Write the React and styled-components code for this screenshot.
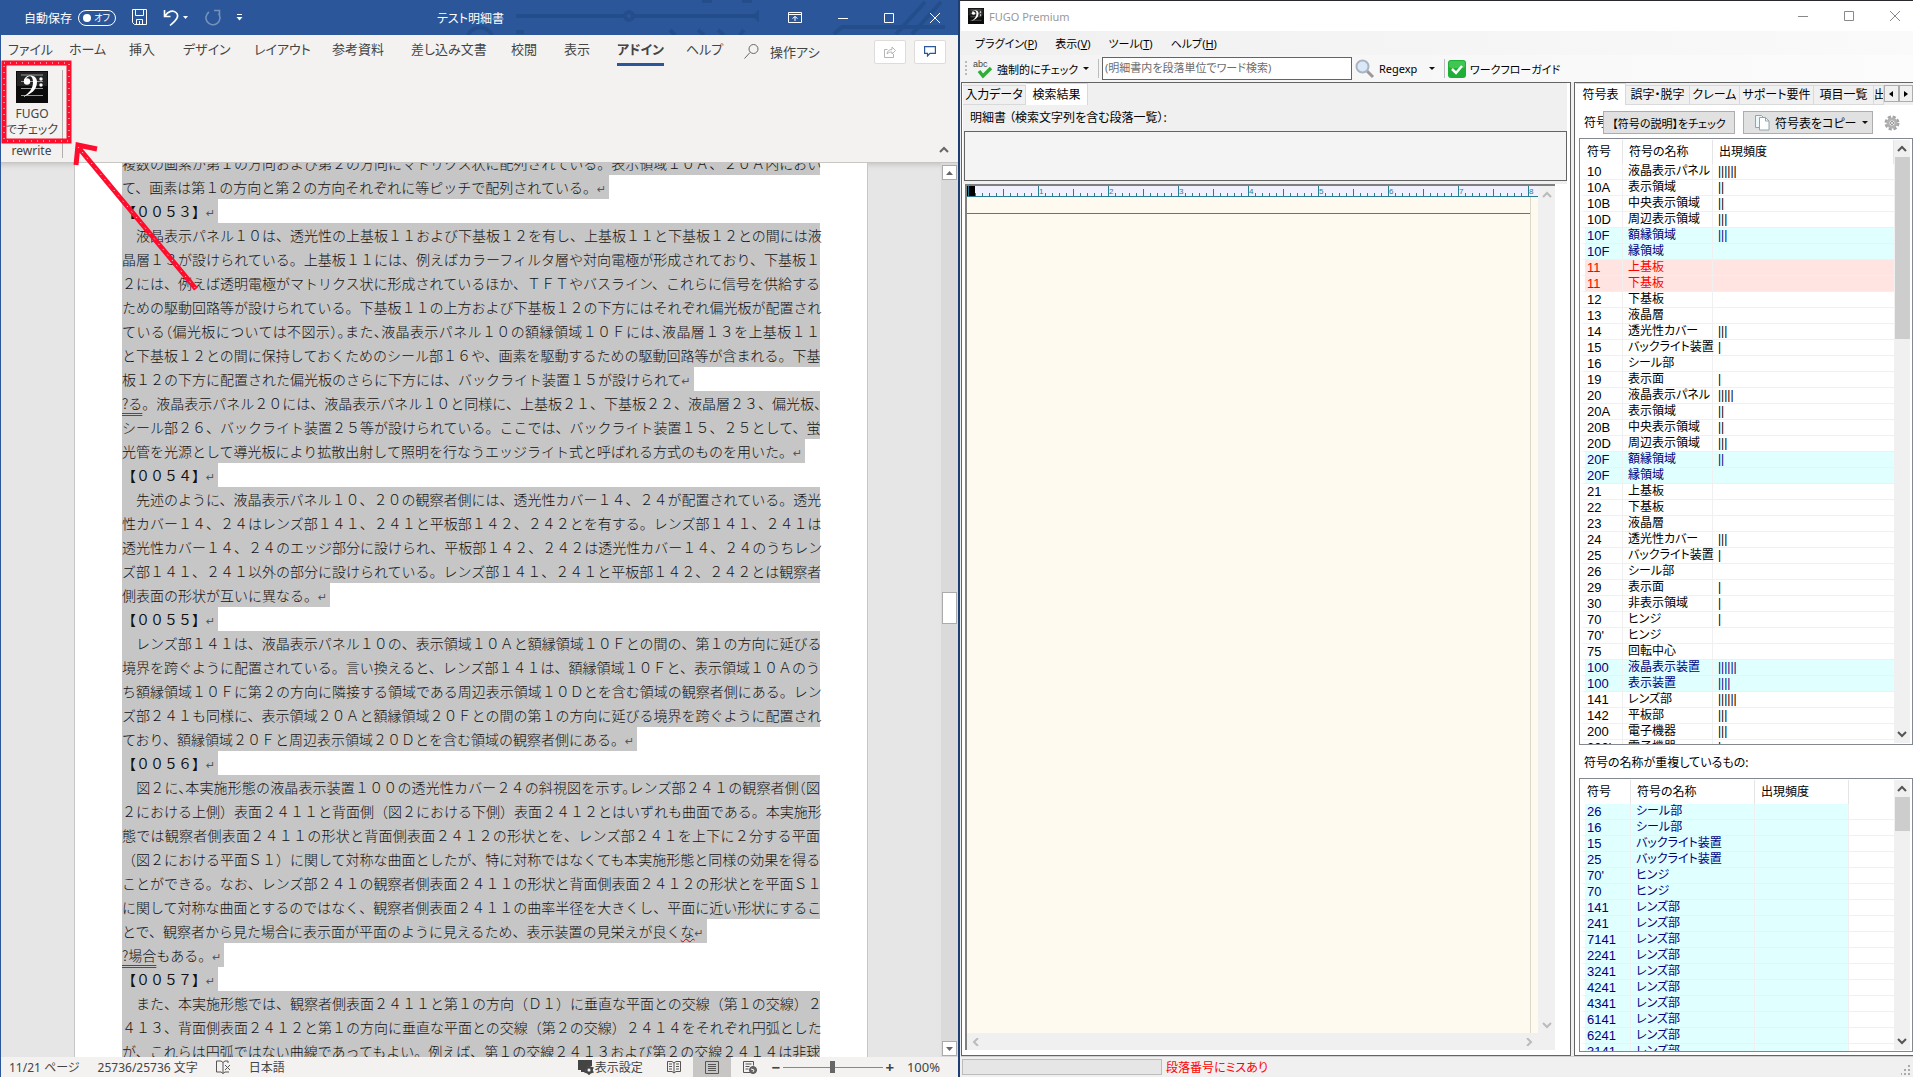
import { useState } from 'react'
import styled, { createGlobalStyle } from 'styled-components'

const TABS = ['ファイル', 'ホーム', '挿入', 'デザイン', 'レイアウト', '参考資料', '差し込み文書', '校閲', '表示', 'アドイン', 'ヘルプ']

// full: the line runs to the right margin, tight: half-width punctuation, head: paragraph number
const LINES = [
    { text: '複数の画素が第１の方向および第２の方向にマトリクス状に配列されている。表示領域１０Ａ、２０Ａ内におい', full: true },
    { text: 'て、画素は第１の方向と第２の方向それぞれに等ピッチで配列されている。' },
    { text: '【００５３】', head: true },
    { text: '　液晶表示パネル１０は、透光性の上基板１１および下基板１２を有し、上基板１１と下基板１２との間には液', full: true },
    { text: '晶層１３が設けられている。上基板１１には、例えばカラーフィルタ層や対向電極が形成されており、下基板１', full: true },
    { text: '２には、例えば透明電極がマトリクス状に形成されているほか、ＴＦＴやバスライン、これらに信号を供給する', full: true },
    { text: 'ための駆動回路等が設けられている。下基板１１の上方および下基板１２の下方にはそれぞれ偏光板が配置され', full: true },
    { text: 'ている（偏光板については不図示）。また、液晶表示パネル１０の額縁領域１０Ｆには、液晶層１３を上基板１１', full: true, tight: true },
    { text: 'と下基板１２との間に保持しておくためのシール部１６や、画素を駆動するための駆動回路等が含まれる。下基', full: true },
    { text: '板１２の下方に配置された偏光板のさらに下方には、バックライト装置１５が設けられて' },
    { mark: '?る', text: '。液晶表示パネル２０には、液晶表示パネル１０と同様に、上基板２１、下基板２２、液晶層２３、偏光板、', full: true },
    { text: 'シール部２６、バックライト装置２５等が設けられている。ここでは、バックライト装置１５、２５として、蛍', full: true },
    { text: '光管を光源として導光板により拡散出射して照明を行なうエッジライト式と呼ばれる方式のものを用いた。' },
    { text: '【００５４】', head: true },
    { text: '　先述のように、液晶表示パネル１０、２０の観察者側には、透光性カバー１４、２４が配置されている。透光', full: true },
    { text: '性カバー１４、２４はレンズ部１４１、２４１と平板部１４２、２４２とを有する。レンズ部１４１、２４１は', full: true },
    { text: '透光性カバー１４、２４のエッジ部分に設けられ、平板部１４２、２４２は透光性カバー１４、２４のうちレン', full: true },
    { text: 'ズ部１４１、２４１以外の部分に設けられている。レンズ部１４１、２４１と平板部１４２、２４２とは観察者', full: true },
    { text: '側表面の形状が互いに異なる。' },
    { text: '【００５５】', head: true },
    { text: '　レンズ部１４１は、液晶表示パネル１０の、表示領域１０Ａと額縁領域１０Ｆとの間の、第１の方向に延びる', full: true },
    { text: '境界を跨ぐように配置されている。言い換えると、レンズ部１４１は、額縁領域１０Ｆと、表示領域１０Ａのう', full: true },
    { text: 'ち額縁領域１０Ｆに第２の方向に隣接する領域である周辺表示領域１０Ｄとを含む領域の観察者側にある。レン', full: true },
    { text: 'ズ部２４１も同様に、表示領域２０Ａと額縁領域２０Ｆとの間の第１の方向に延びる境界を跨ぐように配置され', full: true },
    { text: 'ており、額縁領域２０Ｆと周辺表示領域２０Ｄとを含む領域の観察者側にある。' },
    { text: '【００５６】', head: true },
    { text: '　図２に、本実施形態の液晶表示装置１００の透光性カバー２４の斜視図を示す。レンズ部２４１の観察者側（図', full: true, tight: true },
    { text: '２における上側）表面２４１１と背面側（図２における下側）表面２４１２とはいずれも曲面である。本実施形', full: true },
    { text: '態では観察者側表面２４１１の形状と背面側表面２４１２の形状とを、レンズ部２４１を上下に２分する平面', full: true },
    { text: '（図２における平面Ｓ１）に関して対称な曲面としたが、特に対称ではなくても本実施形態と同様の効果を得る', full: true },
    { text: 'ことができる。なお、レンズ部２４１の観察者側表面２４１１の形状と背面側表面２４１２の形状とを平面Ｓ１', full: true },
    { text: 'に関して対称な曲面とするのではなく、観察者側表面２４１１の曲率半径を大きくし、平面に近い形状にするこ', full: true },
    { text: 'とで、観察者から見た場合に表示面が平面のように見えるため、表示装置の見栄えが良く', wavy: 'な' },
    { mark: '?場合', text: 'もある。' },
    { text: '【００５７】', head: true },
    { text: '　また、本実施形態では、観察者側表面２４１１と第１の方向（Ｄ１）に垂直な平面との交線（第１の交線）２', full: true },
    { text: '４１３、背面側表面２４１２と第１の方向に垂直な平面との交線（第２の交線）２４１４をそれぞれ円弧とした', full: true },
    { text: 'が、これらは円弧ではない曲線であってもよい。例えば、第１の交線２４１３および第２の交線２４１４は非球', full: true },
]

const SIGNS = [
    ['10', '液晶表示パネル', 6], ['10A', '表示領域', 2], ['10B', '中央表示領域', 2], ['10D', '周辺表示領域', 3],
    ['10F', '額縁領域', 3, 'dup'], ['10F', '縁領域', 0, 'dup'], ['11', '上基板', 0, 'error'], ['11', '下基板', 0, 'error'],
    ['12', '下基板', 0], ['13', '液晶層', 0], ['14', '透光性カバー', 3], ['15', 'バックライト装置', 1],
    ['16', 'シール部', 0], ['19', '表示面', 1], ['20', '液晶表示パネル', 5], ['20A', '表示領域', 2],
    ['20B', '中央表示領域', 2], ['20D', '周辺表示領域', 3], ['20F', '額縁領域', 2, 'dup'], ['20F', '縁領域', 0, 'dup'],
    ['21', '上基板', 0], ['22', '下基板', 0], ['23', '液晶層', 0], ['24', '透光性カバー', 3],
    ['25', 'バックライト装置', 1], ['26', 'シール部', 0], ['29', '表示面', 1], ['30', '非表示領域', 1],
    ['70', 'ヒンジ', 1], ["70'", 'ヒンジ', 0], ['75', '回転中心', 0], ['100', '液晶表示装置', 6, 'dup'],
    ['100', '表示装置', 4, 'dup'], ['141', 'レンズ部', 6], ['142', '平板部', 3], ['200', '電子機器', 3], ["200'", '電子機器', 1],
]

const NAMES = [
    ['26', 'シール部'], ['16', 'シール部'], ['15', 'バックライト装置'], ['25', 'バックライト装置'], ["70'", 'ヒンジ'], ['70', 'ヒンジ'],
    ['141', 'レンズ部'], ['241', 'レンズ部'], ['7141', 'レンズ部'], ['2241', 'レンズ部'], ['3241', 'レンズ部'], ['4241', 'レンズ部'],
    ['4341', 'レンズ部'], ['6141', 'レンズ部'], ['6241', 'レンズ部'], ['3141', 'レンズ部'],
]

export default function App() {
    return (
        <>
            <GlobalStyle />
            <Desktop>
                <Word />
                <Fugo />
            </Desktop>
        </>
    )
}

function Word() {
    const [tab, setTab] = useState('アドイン')
    const [zoom, setZoom] = useState(50)

    return (
        <WordWindow>
            <WordTitle>
                <Circuit />
                <QuickBar>
                    <AutoSave>自動保存 <Switch><input type="checkbox" /><span>オフ</span></Switch></AutoSave>
                    <TitleButton aria-label="上書き保存"><svg width="17" height="17" viewBox="0 0 17 17"><path d="M1.500.5h14v15h-12l-2-2zM4.500.5v6h8v-6M5.500 15.500v-5h6v5M8.500 12v3.500" /></svg></TitleButton>
                    <TitleButton aria-label="元に戻す"><svg width="26" height="18" viewBox="0 0 26 18"><path d="M1.500 1v6.500h6M2 7C5 2 10 .8 13 3.500s2.500 6-6 13" strokeWidth="1.600" /><path d="M20 7h5l-2.500 3z" fill="#fff" stroke="none" /></svg></TitleButton>
                    <TitleButton $dim aria-label="やり直し"><svg width="17" height="17" viewBox="0 0 17 17"><path d="M10 1.500h5.500v5M14.500 4.500A7 7 0 1 1 5 3" strokeWidth="1.600" /></svg></TitleButton>
                    <TitleButton aria-label="カスタマイズ"><svg width="7" height="9" viewBox="0 0 7 9"><path d="M1 1.500h5" /><path d="M.5 4h6l-3 3.500z" fill="#fff" stroke="none" /></svg></TitleButton>
                </QuickBar>
                <DocName>テスト明細書</DocName>
                <WordControls>
                    <TitleButton aria-label="リボンの表示"><svg width="14" height="12" viewBox="0 0 14 12"><path d="M.5.5h13v10H.5zM.5 2.500h13M7 9V4.500M4.500 6.500L7 4.500l2.500 2" /></svg></TitleButton>
                    <TitleButton aria-label="最小化"><svg width="10" height="10" viewBox="0 0 10 10"><path d="M0 5.500h10" /></svg></TitleButton>
                    <TitleButton aria-label="最大化"><svg width="10" height="10" viewBox="0 0 10 10"><path d="M.5.5h9v9h-9z" /></svg></TitleButton>
                    <TitleButton aria-label="閉じる"><svg width="10" height="10" viewBox="0 0 10 10"><path d="M0 0l10 10M10 0L0 10" /></svg></TitleButton>
                </WordControls>
            </WordTitle>

            <RibbonTabs>
                {TABS.map(name => (
                    <RibbonTab key={name} $active={tab === name} onClick={() => setTab(name)}><span>{name}</span></RibbonTab>
                ))}
                <Assist>
                    <svg width="15" height="15" viewBox="0 0 15 15" fill="none" stroke="#666"><circle cx="9.500" cy="5" r="4.500" /><path d="M6 8.500L.5 14.500" /></svg>
                    <span>操作アシスト</span>
                </Assist>
                <RibbonBox disabled aria-label="共有"><svg width="12" height="12" viewBox="0 0 12 12" fill="none" stroke="#b5b5b5"><path d="M3.500 3.500H.5v8h9V8M3 8c.5-3 2-4.500 5-4.500V1l3.500 3.500L8 8V6C6 6 4.500 6.500 3 8z" /></svg></RibbonBox>
                <RibbonBox aria-label="コメント"><svg width="12" height="11" viewBox="0 0 12 11" fill="none" stroke="#2b579a" strokeWidth="1.200"><path d="M.6.6h10.800v6.800H6L3.500 10V7.400H.6z" /></svg></RibbonBox>
            </RibbonTabs>

            <Ribbon>
                <Group>
                    <FugoButton>
                        <Clef size={32} />
                        <span>FUGO</span>
                        <span>でチェック</span>
                    </FugoButton>
                    <GroupName>rewrite</GroupName>
                </Group>
                <Collapse aria-label="リボンを折りたたむ"><Chevron dir="up" color="#666" /></Collapse>
            </Ribbon>

            <DocArea>
                <PageArea>
                    <Page>
                        {LINES.map((line, i) => (
                            <Line key={i} $full={line.full} $tight={line.tight} $head={line.head}>
                                {line.mark && <Grammar>{line.mark}</Grammar>}
                                {line.text}
                                {line.wavy && <Spelling>{line.wavy}</Spelling>}
                                {!line.full && <Return>↵</Return>}
                            </Line>
                        ))}
                    </Page>
                </PageArea>
                <WordScroll>
                    <ScrollBox aria-label="上へ"><svg width="7" height="4" viewBox="0 0 7 4"><path d="M0 4h7L3.500 0z" fill="#666" /></svg></ScrollBox>
                    <ScrollThumb />
                    <ScrollBox aria-label="下へ"><svg width="7" height="4" viewBox="0 0 7 4"><path d="M0 0h7L3.500 4z" fill="#666" /></svg></ScrollBox>
                </WordScroll>
            </DocArea>

            <WordStatus>
                <StatusInfo>
                    <span>11/21 ページ</span>
                    <span>25736/25736 文字</span>
                    <svg width="15" height="14" viewBox="0 0 15 14" fill="none" stroke="#555"><path d="M7 2.500L5 1H.5v11H5l2 1.500zM7 2.500L9 1h3v2M7 13.500L9 12h4M9 5l5 5M14 5l-5 5" /></svg>
                    <span>日本語</span>
                </StatusInfo>
                <DisplaySetting>
                    <svg width="16" height="16" viewBox="0 0 16 16"><path d="M0 1h14v6h-4l-3 3v3H3v-2H0z" fill="#444" /><circle cx="11" cy="11" r="3" fill="none" stroke="#444" strokeWidth="2" /><path d="M11 6v10M6.500 8.500l9 5M6.500 13.500l9-5" stroke="#444" strokeWidth="1.500" /><circle cx="11" cy="11" r="1.500" fill="#f3f2f1" /></svg>
                    表示設定
                </DisplaySetting>
                <ViewButton aria-label="閲覧モード"><svg width="14" height="13" viewBox="0 0 14 13"><path d="M7 2L5 .5H.5v10H5L7 12l2-1.500h4.500V.5H9zM7 2v10M2 3h3M2 5.500h3M2 8h3M9 3h3M9 5.500h3M9 8h3" /></svg></ViewButton>
                <ViewButton $active aria-label="印刷レイアウト"><svg width="14" height="13" viewBox="0 0 14 13"><path d="M.5.5h13v12H.5zM3 3.500h8M3 5.500h8M3 7.500h8M3 9.500h8" /></svg></ViewButton>
                <ViewButton aria-label="Web レイアウト"><svg width="14" height="13" viewBox="0 0 14 13"><path d="M7 11.500H.5V.5h10v4M2.500 3h6M2.500 5.500h4M2.500 8h3" /><circle cx="10" cy="9" r="3.500" fill="#666" /><path d="M8 8l3 1-1 2" stroke="#f3f2f1" /></svg></ViewButton>
                <ZoomStep aria-label="縮小">−</ZoomStep>
                <ZoomRange type="range" aria-label="ズーム" value={zoom} onChange={e => setZoom(e.target.value)} />
                <ZoomStep aria-label="拡大">+</ZoomStep>
                <ZoomValue>100%</ZoomValue>
            </WordStatus>

            <RedFrame>
                <rect x="3" y="3" width="65" height="78" stroke="#ff0d2d" strokeWidth="5" />
                <rect x="3" y="3" width="65" height="78" stroke="#fff" strokeDasharray="1 5" />
            </RedFrame>
            <RedArrow />
        </WordWindow>
    )
}

function Fugo() {
    return (
        <FugoWindow>
            <FugoTitle>
                <Clef size={16} />
                <span>FUGO Premium</span>
                <FugoControls>
                    <PlainButton aria-label="最小化"><svg width="10" height="10" viewBox="0 0 10 10"><path d="M0 5.500h10" /></svg></PlainButton>
                    <PlainButton aria-label="最大化"><svg width="10" height="10" viewBox="0 0 10 10"><path d="M.5.5h9v9h-9z" /></svg></PlainButton>
                    <PlainButton aria-label="閉じる"><svg width="10" height="10" viewBox="0 0 10 10"><path d="M0 0l10 10M10 0L0 10" /></svg></PlainButton>
                </FugoControls>
            </FugoTitle>
            <MenuBar>
                <button>プラグイン(<u>P</u>)</button>
                <button>表示(<u>V</u>)</button>
                <button>ツール(<u>T</u>)</button>
                <button>ヘルプ(<u>H</u>)</button>
            </MenuBar>
            <ToolBar>
                <Grip />
                <Tool $width={104}>
                    <svg width="20" height="20" viewBox="0 0 20 20"><text x="0" y="8" fontSize="9" fontFamily="Liberation Sans" fill="#444">abc</text><path d="M6 12l4 5 8-8" fill="none" stroke="#2fae35" strokeWidth="3.500" /></svg>
                    強制的にチェック
                </Tool>
                <Caret />
                <Separator />
                <Search aria-label="ワード検索" placeholder="(明細書内を段落単位でワード検索)" />
                <Tool $width={68}>
                    <svg width="20" height="20" viewBox="0 0 20 20"><path d="M12 12l6 6" stroke="#999" strokeWidth="3" /><circle cx="7.500" cy="7.500" r="6" fill="#d9e9f8" stroke="#a9b4c0" strokeWidth="2" /></svg>
                    Regexp
                </Tool>
                <Caret />
                <Separator />
                <Tool $width={118}>
                    <svg width="18" height="18" viewBox="0 0 18 18"><rect width="18" height="18" rx="3" fill="#1fae36" /><rect x="1" y="1" width="16" height="7" rx="2" fill="#3fc653" /><path d="M4 9l4 4 6-7" fill="none" stroke="#fff" strokeWidth="2.500" /></svg>
                    ワークフローガイド
                </Tool>
            </ToolBar>

            <Panels>
                <Panel $grow>
                    <PanelTabs>
                        <PanelTab $width={63}>入力データ</PanelTab>
                        <PanelTab $width={62} $active>検索結果</PanelTab>
                    </PanelTabs>
                    <ResultHead>
                        <p>明細書 （検索文字列を含む段落一覧）:</p>
                        <ResultBox />
                    </ResultHead>
                    <EditorFrame>
                        <EditorMain>
                            <Ruler />
                            <Paper><RedRule /></Paper>
                            <EditorScroll $row><Chevron dir="left" color="#bbb" /><Chevron dir="right" color="#bbb" /></EditorScroll>
                        </EditorMain>
                        <EditorScroll><Chevron dir="up" color="#bbb" /><Chevron dir="down" color="#bbb" /></EditorScroll>
                    </EditorFrame>
                </Panel>
                <Panel>
                    <PanelTabs>
                        <PanelTab $width={50} $active>符号表</PanelTab>
                        <PanelTab $width={64}>誤字・脱字</PanelTab>
                        <PanelTab $width={50}>クレーム</PanelTab>
                        <PanelTab $width={74}>サポート要件</PanelTab>
                        <PanelTab $width={60}>項目一覧</PanelTab>
                        <PanelTab $width={10}>出</PanelTab>
                        <TabArrow aria-label="前のタブ"><svg width="4" height="6" viewBox="0 0 4 6"><path d="M4 0v6L0 3z" /></svg></TabArrow>
                        <TabArrow aria-label="次のタブ"><svg width="4" height="6" viewBox="0 0 4 6"><path d="M0 0v6l4-3z" /></svg></TabArrow>
                    </PanelTabs>
                    <SignTools>
                        <SignLabel>符号</SignLabel>
                        <GrayButton $width={132}>【符号の説明】をチェック</GrayButton>
                        <GrayButton $width={130} $menu>
                            <svg width="16" height="17" viewBox="0 0 16 17"><path d="M1.500 1.500h6l3 3v9h-9z" fill="#eef7fa" stroke="#8fa6ad" /><path d="M5.500 3.500h6l3.500 3.500v9H5.500z" fill="#fff" stroke="#8fa6ad" /><path d="M11.500 3.500V7H15" fill="none" stroke="#8fa6ad" /></svg>
                            符号表をコピー
                            <Caret />
                        </GrayButton>
                        <PlainButton aria-label="設定"><svg width="16" height="16" viewBox="0 0 16 16"><circle cx="8" cy="8" r="6" stroke="#a5a5a5" strokeWidth="3" strokeDasharray="3 1.700" /><circle cx="8" cy="8" r="4" stroke="#b2b2b2" strokeWidth="3" /><circle cx="8" cy="8" r="1.500" stroke="#888" /></svg></PlainButton>
                    </SignTools>
                    <ListFrame $grow>
                        <SignTable rows={SIGNS} cols={[42, 90, 181]} />
                        <ListScroll thumb={182} />
                    </ListFrame>
                    <DupLabel>符号の名称が重複しているもの:</DupLabel>
                    <ListFrame>
                        <SignTable rows={NAMES.map(row => [...row, 0, 'dup'])} cols={[50, 124, 94, 45]} wide />
                        <ListScroll thumb={34} />
                    </ListFrame>
                </Panel>
            </Panels>

            <FugoStatus>
                <Progress />
                <span>段落番号にミスあり</span>
                <svg width="10" height="10" viewBox="0 0 10 10"><path d="M7 0h2v2H7zM3 4h2v2H3zM7 4h2v2H7zM-1 8h2v2h-2zM3 8h2v2H3zM7 8h2v2H7z" fill="#aaa" /></svg>
            </FugoStatus>
        </FugoWindow>
    )
}

function SignTable({ rows, cols, wide }) {
    return (
        <Table>
            <colgroup>{cols.map((w, i) => <Col key={i} $width={w} />)}</colgroup>
            <thead>
                <tr>
                    <th>符号</th>
                    <th>符号の名称</th>
                    <th>出現頻度</th>
                    {wide && <td />}
                </tr>
            </thead>
            <tbody>
                {rows.map(([sign, name, count, kind], i) => (
                    <Row key={i} $kind={kind} $wide={wide}>
                        <td>{sign}</td>
                        <td>{name}</td>
                        <td>{'|'.repeat(count)}</td>
                        {wide && <td />}
                    </Row>
                ))}
            </tbody>
        </Table>
    )
}

function ListScroll({ thumb }) {
    return (
        <ListScrollBar>
            <Chevron dir="up" color="#555" />
            <ListThumb $height={thumb} />
            <Chevron dir="down" color="#555" />
        </ListScrollBar>
    )
}

const CHEVRONS = { up: 'M1 6l4-4 4 4', down: 'M1 2l4 4 4-4', left: 'M7 0L3 4l4 4', right: 'M3 0l4 4-4 4' }

function Chevron({ dir, color }) {
    return <svg width="10" height="8" viewBox="0 0 10 8"><path d={CHEVRONS[dir]} fill="none" stroke={color} strokeWidth="2" /></svg>
}

function Clef({ size }) {
    return (
        <svg width={size} height={size} viewBox="0 0 32 32">
            <rect width="32" height="32" fill="#0b0b0b" />
            <rect x="1" y="1" width="30" height="14" fill="#242424" />
            <path d="M5 4h22M5 10.500h22M5 17.500h22M5 24.500h22" stroke="#999" />
            <path d="M8 10C8 3 21 2 21 11c0 8-6 12-14 15 6-4 10-8 10-15 0-7-5-7-7-3z" fill="#fff" />
            <circle cx="11" cy="10.500" r="3.200" fill="#fff" />
            <circle cx="25" cy="8" r="1.700" fill="#fff" />
            <circle cx="25" cy="14" r="1.700" fill="#fff" />
        </svg>
    )
}

function Circuit() {
    return (
        <CircuitArt viewBox="0 0 500 35" fill="none" stroke="#244d8b" strokeWidth="4">
            <path d="M60 16h108M178 16h124" />
            <circle cx="173" cy="16" r="4" />
            <path d="M303 10v12c-6-3-6-9 0-12z" fill="#244d8b" stroke="none" />
            <path d="M12 35c6-10 18-10 24 0M60 32h8M214 30l5 5M242 30l6 5M262 30l6 5M288 30l-4 5M246 1h10M286 1h10" />
            <path d="M378 34l8-7h103M440 34l29-32M456 34l29-32" />
        </CircuitArt>
    )
}

function Ruler() {
    const ticks = Array.from({ length: 81 }, (_, i) => i)
    return (
        <RulerArt>
            <rect width="8" height="10" fill="#000" />
            {ticks.map(i => {
                const h = i % 10 === 0 ? 10 : i % 5 === 0 ? 7 : 3
                return <rect key={i} x={i * 7 + 1} y={10 - h} width="1" height={h} fill="#2a7c94" />
            })}
            {[1, 2, 3, 4, 5, 6, 7, 8].map(n => (
                <text key={n} x={n * 70 + 2} y="8" fontSize="8" fontFamily="Liberation Sans" fill="#2a7c94">{n}</text>
            ))}
        </RulerArt>
    )
}

function RedArrow() {
    return (
        <ArrowArt width="130" height="150" viewBox="0 0 130 150" fill="none">
            <path d="M6 6l118 142M4 24L6 4l19 4" stroke="#ff0d2d" strokeWidth="5" />
            <path d="M6 6l118 142" stroke="#fff" strokeDasharray="1 6" />
        </ArrowArt>
    )
}

const GlobalStyle = createGlobalStyle`
    * { box-sizing: border-box; }
    body {
        margin: 0;
        font-family: 'Noto Sans', 'Noto Sans CJK JP', sans-serif;
        font-size: 12px;
        font-feature-settings: 'palt';
        overflow: hidden;
    }
    button, input {
        font: inherit;
        font-feature-settings: inherit;
        color: inherit;
        padding: 0;
        border: none;
        background: none;
    }
    svg { flex-shrink: 0; }
    p { margin: 0; }
`

const Desktop = styled.div`
    display: grid;
    grid-template-columns: 960fr 953fr;
    height: 100vh;
`

const WordWindow = styled.div`
    position: relative;
    display: flex;
    flex-direction: column;
    min-width: 0;
    min-height: 0;
    height: 100vh;
    overflow: hidden;
    background: #f3f2f1;
    border-left: 1px solid #2b579a;
    border-right: 2px solid #1d3f73;
    color: #444;
`

const WordTitle = styled.header`
    position: relative;
    display: grid;
    grid-template-columns: 1fr auto 1fr;
    align-items: center;
    height: 35px;
    padding-right: 18px;
    background: #2b579a;
    color: #fff;
`

const CircuitArt = styled.svg`
    position: absolute;
    right: 2px;
    top: 0;
    width: 500px;
    height: 35px;
`

const QuickBar = styled.div`
    display: flex;
    align-items: center;
    gap: 15px;
    padding-left: 23px;
`

const AutoSave = styled.label`
    display: flex;
    align-items: center;
    gap: 6px;
`

const Switch = styled.span`
    position: relative;
    display: flex;
    input {
        appearance: none;
        margin: 0;
        width: 38px;
        height: 16px;
        border: 1px solid #fff;
        border-radius: 8px;
    }
    input::before {
        content: '';
        display: block;
        width: 8px;
        height: 8px;
        margin: 3px 4px;
        border-radius: 50%;
        background: #fff;
    }
    span {
        position: absolute;
        right: 6px;
        top: 0;
        font-size: 9px;
        line-height: 16px;
    }
`

const TitleButton = styled.button`
    position: relative;
    display: flex;
    opacity: ${({ $dim }) => $dim ? 0.35 : 1};
    svg {
        fill: none;
        stroke: #fff;
    }
`

const DocName = styled.div`
    position: relative;
`

const WordControls = styled.div`
    position: relative;
    display: flex;
    justify-content: flex-end;
    align-items: center;
    gap: 36px;
`

const RibbonTabs = styled.nav`
    display: grid;
    grid-template-columns: 61px 60px 54px 71px 78px 79px 100px 53px 53px 69px 58px 1fr 32px 40px;
    align-items: center;
    height: 35px;
    padding: 0 12px 2px 7px;
    font-size: 13px;
`

const RibbonTab = styled.button`
    justify-self: start;
    height: 28px;
    line-height: 22px;
    white-space: nowrap;
    font-weight: ${({ $active }) => $active ? 700 : 400};
    span {
        display: block;
        height: 28px;
        border-bottom: 3px solid ${({ $active }) => $active ? '#2b579a' : 'transparent'};
    }
`

const Assist = styled.div`
    display: flex;
    align-items: center;
    gap: 11px;
    width: 76px;
    overflow: hidden;
    white-space: nowrap;
`

const RibbonBox = styled.button`
    display: flex;
    align-items: center;
    justify-content: center;
    justify-self: end;
    width: 32px;
    height: 24px;
    background: #fff;
    border: 1px solid #dedcda;
    border-radius: 2px;
`

const Ribbon = styled.section`
    display: flex;
    justify-content: space-between;
    align-items: flex-end;
    height: 93px;
    padding-right: 9px;
    border-bottom: 1px solid #c8c6c4;
`

const Group = styled.div`
    display: flex;
    flex-direction: column;
    align-items: center;
    width: 62px;
    height: 88px;
    margin-bottom: 4px;
    border-right: 1px solid #b1b0af;
`

const FugoButton = styled.button`
    display: flex;
    flex-direction: column;
    align-items: center;
    height: 76px;
    padding: 1px 0 0 1px;
    line-height: 16px;
    svg { margin-bottom: 3px; }
`

const GroupName = styled.div`
    line-height: 14px;
`

const Collapse = styled.button`
    padding-bottom: 4px;
`

const DocArea = styled.main`
    flex: 1;
    display: flex;
    min-height: 0;
    background: #e6e6e6;
`

const PageArea = styled.div`
    flex: 1;
    overflow: hidden;
    box-shadow: inset 0 6px 6px -5px #bbb;
`

const Page = styled.article`
    width: 794px;
    margin: 0 auto;
    padding: 0 47px;
    background: #fff;
    border: solid #c6c6c6;
    border-width: 0 1px;
    color: #111;
    font-family: 'Noto Sans CJK JP', sans-serif;
    font-feature-settings: normal;
    font-size: 14px;
    font-weight: 300;
    line-height: 24px;
    & > :first-child { margin-top: -12px; }
`

const Line = styled.p`
    width: ${({ $full }) => $full ? '698px' : 'fit-content'};
    height: 24px;
    background: #c6c6c6;
    white-space: nowrap;
    text-align-last: ${({ $full }) => $full ? 'justify' : 'left'};
    font-feature-settings: ${({ $tight }) => $tight ? "'halt'" : 'normal'};
    font-weight: ${({ $head }) => $head ? 400 : 300};
`

const Grammar = styled.span`
    text-decoration: underline double #2353b5;
    text-underline-offset: 4px;
`

const Spelling = styled.span`
    text-decoration: underline wavy #c00000 1px;
`

const Return = styled.span`
    display: inline-block;
    width: 12px;
    font-family: 'DejaVu Sans', sans-serif;
    font-size: 11px;
    font-weight: 400;
    line-height: 20px;
    color: #555;
`

const WordScroll = styled.div`
    display: flex;
    flex-direction: column;
    justify-content: space-between;
    width: 17px;
    padding: 2px 1px 1px;
    background: #dadada;
`

const ScrollBox = styled.button`
    display: flex;
    align-items: center;
    justify-content: center;
    height: 15px;
    background: #fff;
    border: 1px solid #ababab;
`

const ScrollThumb = styled.div`
    height: 32px;
    margin-bottom: 6px;
    background: #fff;
    border: 1px solid #ababab;
`

const WordStatus = styled.footer`
    display: flex;
    align-items: center;
    height: 20px;
    padding-right: 18px;
    white-space: nowrap;
`

const StatusInfo = styled.div`
    flex: 1;
    display: flex;
    align-items: center;
    gap: 18px;
    padding-left: 8px;
`

const DisplaySetting = styled.button`
    display: flex;
    align-items: center;
    gap: 1px;
    margin-right: 12px;
`

const ViewButton = styled.button`
    display: flex;
    align-items: center;
    justify-content: center;
    width: 38px;
    height: 20px;
    background: ${({ $active }) => $active ? '#c8c6c4' : 'transparent'};
    svg {
        fill: none;
        stroke: #555;
    }
`

const ZoomStep = styled.button`
    width: 14px;
    font-size: 15px;
    font-weight: 700;
    line-height: 16px;
`

const ZoomRange = styled.input`
    appearance: none;
    width: 100px;
    height: 16px;
    margin: 0;
    background: linear-gradient(#888, #888) center / 100% 1px no-repeat;
    &::-webkit-slider-thumb {
        appearance: none;
        width: 5px;
        height: 12px;
        background: #666;
    }
`

const ZoomValue = styled.span`
    padding-left: 10px;
    font-size: 13px;
`

const RedFrame = styled.svg`
    position: absolute;
    left: 0;
    top: 60px;
    width: 71px;
    height: 84px;
    fill: none;
    pointer-events: none;
`

const ArrowArt = styled.svg`
    position: absolute;
    left: 71px;
    top: 141px;
    pointer-events: none;
`

const FugoWindow = styled.div`
    display: flex;
    flex-direction: column;
    min-width: 0;
    min-height: 0;
    height: 100vh;
    padding-left: 1px;
    background: #f0f0f0;
    border-top: 1px solid #2a2a2e;
    color: #000;
`

const FugoTitle = styled.header`
    display: flex;
    align-items: center;
    gap: 5px;
    height: 30px;
    padding: 0 13px 0 7px;
    background: #fff;
    color: #999;
    font-size: 11px;
`

const FugoControls = styled.div`
    flex: 1;
    display: flex;
    justify-content: flex-end;
    gap: 36px;
`

const PlainButton = styled.button`
    display: flex;
    svg {
        fill: none;
        stroke: #888;
    }
`

const MenuBar = styled.nav`
    display: flex;
    gap: 18px;
    height: 24px;
    padding-left: 14px;
    background: linear-gradient(90deg, #f0f0f0, #fafafa);
    font-size: 11px;
`

const ToolBar = styled.div`
    display: flex;
    align-items: center;
    height: 27px;
    padding-left: 4px;
    background: linear-gradient(90deg, #f3f3f3, #fcfcfc);
    font-size: 11px;
`

const Grip = styled.span`
    width: 2px;
    height: 16px;
    margin-right: 6px;
    background: repeating-linear-gradient(#bbb 0 2px, transparent 2px 4px);
`

const Tool = styled.button`
    display: flex;
    align-items: center;
    gap: 4px;
    width: ${({ $width }) => $width}px;
    white-space: nowrap;
`

const Caret = styled.span`
    margin: 0 6px;
    border: 3px solid transparent;
    border-top-color: #111;
    border-bottom-width: 0;
`

const Separator = styled.span`
    width: 1px;
    height: 19px;
    margin: 0 3px;
    background: #bdbdbd;
`

const Search = styled.input`
    width: 250px;
    height: 23px;
    margin-right: 3px;
    padding: 0 2px 3px;
    background: #fff;
    border: 1px solid #646464;
    &::placeholder {
        color: #6d6d6d;
        opacity: 1;
    }
`

const Panels = styled.div`
    flex: 1;
    display: flex;
    gap: 3px;
    min-height: 0;
    border-bottom: 1px solid #d0d0d0;
`

const Panel = styled.section`
    flex: ${({ $grow }) => $grow ? '1' : '0 0 339px'};
    display: flex;
    flex-direction: column;
    min-width: 0;
    background: #fff;
    border: 1px solid #646464;
    border-right-width: ${({ $grow }) => $grow ? 1 : 0}px;
    padding: 0 ${({ $grow }) => $grow ? 3 : 0}px 3px 1px;
`

const PanelTabs = styled.div`
    display: flex;
    align-items: flex-end;
    height: 22px;
    background: #f0f0f0;
    overflow: hidden;
`

const PanelTab = styled.button`
    flex-shrink: 0;
    width: ${({ $width }) => $width}px;
    height: ${({ $active }) => $active ? 22 : 20}px;
    line-height: 18px;
    overflow: hidden;
    white-space: nowrap;
    background: ${({ $active }) => $active ? '#fff' : '#f0f0f0'};
    border: 1px solid #d9d9d9;
    border-width: 1px 1px ${({ $active }) => $active ? 0 : 1}px 0;
`

const TabArrow = styled.button`
    display: flex;
    align-items: center;
    justify-content: center;
    flex: 1;
    height: 17px;
    margin-bottom: 3px;
    background: #f0f0f0;
    border: 1px solid #adadad;
`

const ResultHead = styled.div`
    padding: 0 0 3px 1px;
    background: #f0f0f0;
    p {
        padding-left: 6px;
        line-height: 26px;
    }
`

const ResultBox = styled.div`
    height: 50px;
    background: #f4f4f4;
    border: 1px solid #646464;
`

const EditorFrame = styled.div`
    flex: 1;
    display: flex;
    min-height: 0;
    margin: 0 12px 2px 2px;
    border: solid #808080;
    border-width: 2px 0 0 2px;
`

const EditorMain = styled.div`
    flex: 1;
    display: flex;
    flex-direction: column;
    min-width: 0;
`

const RulerArt = styled.svg`
    width: 100%;
    height: 11px;
    background: #f0f0ff;
    border-bottom: 1px solid #2a7c94;
`

const Paper = styled.div`
    flex: 1;
    background: linear-gradient(#dcd8c8, #dcd8c8) right 7px top / 1px 100% no-repeat #fffaf0;
`

const RedRule = styled.div`
    height: 17px;
    margin-right: 8px;
    border-bottom: 1px solid #9a6052;
`

const EditorScroll = styled.div`
    display: flex;
    flex-direction: ${({ $row }) => $row ? 'row' : 'column'};
    justify-content: space-between;
    align-items: center;
    background: #f0f0f0;
    ${({ $row }) => $row ? 'height: 17px; padding: 0 4px;' : 'width: 17px; padding: 5px 0 21px;'}
`

const SignTools = styled.div`
    display: flex;
    align-items: center;
    height: 33px;
    padding: 2px 0 0 8px;
`

const SignLabel = styled.span`
    width: 19px;
    height: 20px;
    overflow: hidden;
    white-space: nowrap;
`

const GrayButton = styled.button`
    display: flex;
    align-items: center;
    justify-content: center;
    gap: 5px;
    width: ${({ $width }) => $width}px;
    height: 23px;
    margin-right: ${({ $menu }) => $menu ? 11 : 8}px;
    padding-left: ${({ $menu }) => $menu ? 10 : 0}px;
    white-space: nowrap;
    background: #e1e1e1;
    border: 1px solid #adadad;
    font-size: ${({ $menu }) => $menu ? 12 : 11}px;
    ${Caret} { margin: 0 4px 0 auto; }
`

const ListFrame = styled.div`
    flex: ${({ $grow }) => $grow ? '1' : '0 0 274px'};
    display: flex;
    min-height: 0;
    margin: 0 0 0 3px;
    padding: 1px 2px 1px 1px;
    overflow: hidden;
    border: 1px solid #828790;
`

const Table = styled.table`
    flex: 1;
    align-self: flex-start;
    width: 313px;
    table-layout: fixed;
    border-collapse: separate;
    border-spacing: 0;
    font-family: 'Liberation Sans', 'Noto Sans CJK JP', sans-serif;
    line-height: 15px;
    white-space: nowrap;
    th {
        height: 24px;
        padding: 0 0 0 6px;
        font-weight: 400;
        text-align: left;
        border-right: 1px solid #e5e5e5;
    }
    thead td { padding: 0; }
`

const Col = styled.col`
    width: ${({ $width }) => $width}px;
`

const ROW_COLORS = { dup: ['#e0ffff', '#000080'], error: ['#ffe4e1', '#ff0000'] }

const Row = styled.tr`
    color: ${({ $kind }) => $kind ? ROW_COLORS[$kind][1] : '#000'};
    td {
        height: 16px;
        padding: 0 0 0 5px;
        background: ${({ $kind }) => $kind ? ROW_COLORS[$kind][0] : '#fff'};
        border: solid #f0f0f0;
        border-width: 0 1px 1px 0;
    }
    td:first-child {
        padding-left: 2px;
        border-left: 4px solid #fff;
        font-size: 13px;
    }
    td:last-child {
        border-right: 0;
        ${({ $wide }) => $wide && 'background: #fff;'}
    }
`

const ListScrollBar = styled.div`
    display: flex;
    flex-direction: column;
    align-items: center;
    width: 16px;
    padding: 5px 0;
    background: #f0f0f0;
    & > :last-child { margin-top: auto; }
`

const ListThumb = styled.div`
    width: 15px;
    height: ${({ $height }) => $height}px;
    margin-top: 4px;
    background: #cdcdcd;
`

const DupLabel = styled.p`
    height: 33px;
    padding-left: 8px;
    line-height: 35px;
`

const FugoStatus = styled.footer`
    display: flex;
    align-items: center;
    gap: 4px;
    height: 20px;
    color: #ff0000;
    white-space: nowrap;
    svg {
        margin: 5px 2px 0 auto;
    }
`

const Progress = styled.div`
    width: 200px;
    height: 16px;
    margin-left: 1px;
    background: #e6e6e6;
    border: 1px solid #bcbcbc;
`
